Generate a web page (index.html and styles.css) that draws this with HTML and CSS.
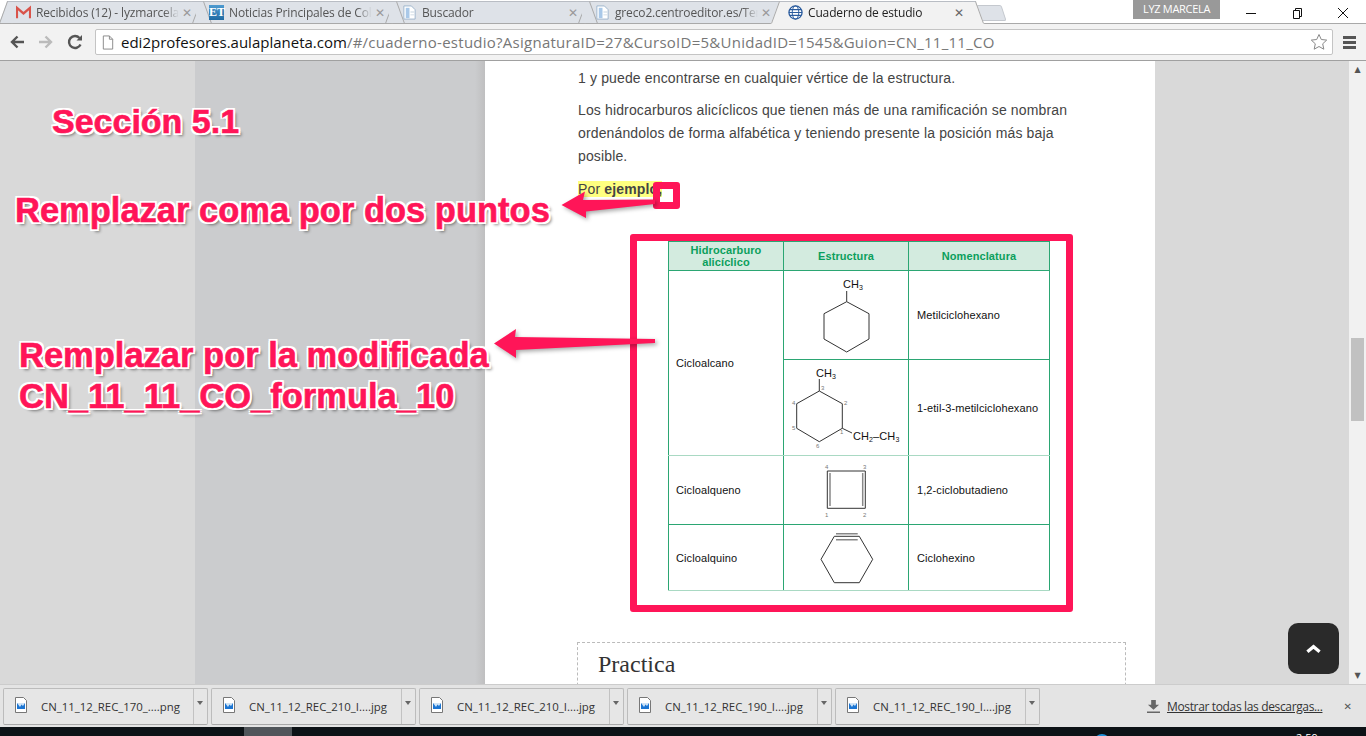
FILE: index.html
```html
<!DOCTYPE html>
<html lang="es">
<head>
  <meta charset="UTF-8">
  <title>Cuaderno de estudio</title>
  <link rel="stylesheet" href="styles.css">
</head>
<body>
  <!-- tab strip -->
  <div class="tabstrip">
    <div class="tab">
      <svg class="favicon" viewBox="0 0 16 16"><path d="M1 14V3l7 6 7-6v11" fill="none" stroke="#d9534a" stroke-width="2.4"/></svg>
      <span class="tab-title">Recibidos (12) - lyzmarcela</span>
      <span class="tab-close">✕</span>
    </div>
    <div class="tab">
      <span class="favicon favicon-et">ET</span>
      <span class="tab-title">Noticias Principales de Col</span>
      <span class="tab-close">✕</span>
    </div>
    <div class="tab">
      <svg class="favicon" viewBox="0 0 16 16"><path d="M2 1h8l4 4v10H2z" fill="#fff" stroke="#9db4cc"/><path d="M4 3h4v11H4z" fill="#a9c8e8"/><path d="M9 7h4v1H9zM9 10h4v1H9z" fill="#c6d3df"/></svg>
      <span class="tab-title">Buscador</span>
      <span class="tab-close">✕</span>
    </div>
    <div class="tab">
      <svg class="favicon" viewBox="0 0 16 16"><path d="M2 1h8l4 4v10H2z" fill="#fff" stroke="#9db4cc"/><path d="M4 3h4v11H4z" fill="#a9c8e8"/><path d="M9 7h4v1H9zM9 10h4v1H9z" fill="#c6d3df"/></svg>
      <span class="tab-title">greco2.centroeditor.es/Ter</span>
      <span class="tab-close">✕</span>
    </div>
    <div class="tab tab-active">
      <svg class="favicon" viewBox="0 0 16 16"><circle cx="8" cy="8" r="7" fill="#fff" stroke="#2b5c9e" stroke-width="1.4"/><path d="M2 5h12M1 8h14M2 11h12" stroke="#2b5c9e" stroke-width="1.3"/><ellipse cx="8" cy="8" rx="3.5" ry="7" fill="none" stroke="#2b5c9e"/></svg>
      <span class="tab-title">Cuaderno de estudio</span>
      <span class="tab-close">✕</span>
    </div>
    <div class="newtab"></div>
    <div class="user-badge">LYZ MARCELA</div>
    <div class="winctl">
      <svg viewBox="0 0 12 12"><path d="M1 6.500h10" stroke="#111" stroke-width="1"/></svg>
      <svg viewBox="0 0 12 12"><path d="M2.500 3.500h6v8h-6zM4.500 3.500v-2h6v8h-2" fill="none" stroke="#111"/></svg>
      <svg viewBox="0 0 12 12"><path d="M1 1l10 10M11 1L1 11" stroke="#111"/></svg>
    </div>
  </div>

  <!-- toolbar -->
  <div class="toolbar">
    <svg class="navicon" viewBox="0 0 16 16"><path d="M15 8H4M8.500 2.500L3 8l5.500 5.500" fill="none" stroke="#555" stroke-width="2.400"/></svg>
    <svg class="navicon" viewBox="0 0 16 16"><path d="M1 8h11M7.500 2.500L13 8l-5.500 5.500" fill="none" stroke="#bbb" stroke-width="2.400"/></svg>
    <svg class="navicon" viewBox="0 0 16 16"><path d="M13.500 10.500A6 6 0 1 1 12.500 4" fill="none" stroke="#555" stroke-width="2.400"/><path d="M9.500 6.500H15V1z" fill="#555"/></svg>
    <div class="omnibox">
      <svg class="pageicon" viewBox="0 0 12 16"><path d="M1 1h6.500L11 4.500V15H1z M7.500 1v3.500H11" fill="#fff" stroke="#888"/></svg>
      <span class="url"><b>edi2profesores.aulaplaneta.com</b>/#/cuaderno-estudio?AsignaturaID=27&amp;CursoID=5&amp;UnidadID=1545&amp;Guion=CN_11_11_CO</span>
      <svg class="star" viewBox="0 0 18 18"><path d="M9 1.500l2.300 5 5.400.6-4 3.700 1.100 5.400L9 13.500l-4.800 2.700 1.100-5.400-4-3.700 5.400-.6z" fill="#fff" stroke="#888"/></svg>
    </div>
    <div class="menu-btn"><i></i><i></i><i></i></div>
  </div>

  <!-- page -->
  <div class="viewport">
    <div class="gutter-left"><div class="gutter-a"></div><div class="gutter-b"></div></div>
    <div class="article">
      <p class="clipped">Cuando el ciclo tiene una sola ramificación, esta no lleva el localizador</p>
      <p>1 y puede encontrarse en cualquier vértice de la estructura.</p>
      <p>Los hidrocarburos alicíclicos que tienen más de una ramificación se nombran ordenándolos de forma alfabética y teniendo presente la posición más baja posible.</p>
      <p class="example"><mark>Por <strong>ejemplo,</strong></mark></p>

      <table class="formula">
        <colgroup><col class="col-a"><col class="col-b"><col class="col-c"></colgroup>
        <tr class="row-head">
          <th>Hidrocarburo alicíclico</th><th>Estructura</th><th>Nomenclatura</th>
        </tr>
        <tr class="row-1">
          <td rowspan="2">Cicloalcano</td>
          <td class="mol">
            <svg viewBox="0 0 125 88">
              <path d="M62.700 30.700L85 42.700V68L62.700 81 40 68V42.700zM62.700 30.700V20"/>
              <text x="59" y="17">CH<tspan class="sub" dy="2">3</tspan></text>
            </svg>
          </td>
          <td class="name">Metilciclohexano</td>
        </tr>
        <tr class="row-2">
          <td class="mol">
            <svg viewBox="0 0 125 95">
              <path d="M35.300 31L58.300 43.700V68.300L35.300 81.700 12.700 68.300V43.700zM35.300 31V19M58.300 68.300L68 73"/>
              <text x="32" y="17">CH<tspan class="sub" dy="2">3</tspan></text>
              <text x="69" y="80">CH<tspan class="sub" dy="2">2</tspan><tspan dy="-2">–CH</tspan><tspan class="sub" dy="2">3</tspan></text>
              <text class="num" x="37" y="30">3</text><text class="num" x="60" y="45">2</text>
              <text class="num" x="8" y="45">4</text><text class="num" x="8" y="70">5</text>
              <text class="num" x="32" y="88">6</text><text class="num" x="56" y="74">1</text>
            </svg>
          </td>
          <td class="name">1-etil-3-metilciclohexano</td>
        </tr>
        <tr class="row-3">
          <td>Cicloalqueno</td>
          <td class="mol">
            <svg viewBox="0 0 125 68">
              <path d="M43.300 15H81.300V52.300H43.300z"/>
              <path class="bond2" d="M46 17V50M78.700 17V50"/>
              <text class="num" x="41" y="13">4</text><text class="num" x="79" y="13">3</text>
              <text class="num" x="41" y="61">1</text><text class="num" x="79" y="61">2</text>
            </svg>
          </td>
          <td class="name">1,2-ciclobutadieno</td>
        </tr>
        <tr class="row-4">
          <td>Cicloalquino</td>
          <td class="mol">
            <svg viewBox="0 0 125 65">
              <path d="M50.300 11.300H75.300L88.700 34.300 75.300 57.700H50.300L37 34.300z"/>
              <path class="bond2" d="M52 8.700H73.700M52 14.700H73.700"/>
            </svg>
          </td>
          <td class="name">Ciclohexino</td>
        </tr>
      </table>

      <div class="practica"><h3>Practica</h3></div>
    </div>
    <div class="gutter-right"></div>
    <div class="scrollbar">
      <span class="sb-arrow">▲</span>
      <div class="sb-track"><div class="sb-thumb"></div></div>
      <span class="sb-arrow">▼</span>
    </div>

    <!-- reviewer notes painted over the capture -->
    <div class="note note-seccion">Sección 5.1</div>
    <div class="note note-coma">Remplazar coma por dos puntos</div>
    <div class="note note-modif">Remplazar por la modificada<br>CN_11_11_CO_formula_10</div>
    <div class="mark-box"></div>
    <div class="mark-frame"></div>
    <svg class="arrows" viewBox="0 1 1366 623">
      <path d="M561.500 145L585 131.500 583 140 655 139.500 655 144 586 151.500 586 158z"/>
      <path d="M494 283.500L516 269 515 277 655 279 655 283 516 290 516 298z"/>
    </svg>
    <div class="totop"><svg viewBox="0 0 16 10"><path d="M1.500 8L8 2.500 14.500 8" fill="none" stroke="#fff" stroke-width="3.500"/></svg></div>
  </div>

  <!-- download shelf -->
  <div class="shelf">
    <div class="dl"><div class="dl-main"><svg class="dl-icon" viewBox="0 0 12 16"><path d="M.5.500h8l3 3v12H.5z" fill="#fff" stroke="#777"/><path d="M2 6h8v6H2z" fill="#1c75d2"/><path d="M2 6h8l-2 3-1.500-1.500L5 10z" fill="#cfe4f7"/></svg><span>CN_11_12_REC_170_....png</span></div><div class="dl-drop"></div></div>
    <div class="dl"><div class="dl-main"><svg class="dl-icon" viewBox="0 0 12 16"><path d="M.5.500h8l3 3v12H.5z" fill="#fff" stroke="#777"/><path d="M2 6h8v6H2z" fill="#1c75d2"/><path d="M2 6h8l-2 3-1.500-1.500L5 10z" fill="#cfe4f7"/></svg><span>CN_11_12_REC_210_I....jpg</span></div><div class="dl-drop"></div></div>
    <div class="dl"><div class="dl-main"><svg class="dl-icon" viewBox="0 0 12 16"><path d="M.5.500h8l3 3v12H.5z" fill="#fff" stroke="#777"/><path d="M2 6h8v6H2z" fill="#1c75d2"/><path d="M2 6h8l-2 3-1.500-1.500L5 10z" fill="#cfe4f7"/></svg><span>CN_11_12_REC_210_I....jpg</span></div><div class="dl-drop"></div></div>
    <div class="dl"><div class="dl-main"><svg class="dl-icon" viewBox="0 0 12 16"><path d="M.5.500h8l3 3v12H.5z" fill="#fff" stroke="#777"/><path d="M2 6h8v6H2z" fill="#1c75d2"/><path d="M2 6h8l-2 3-1.500-1.500L5 10z" fill="#cfe4f7"/></svg><span>CN_11_12_REC_190_I....jpg</span></div><div class="dl-drop"></div></div>
    <div class="dl"><div class="dl-main"><svg class="dl-icon" viewBox="0 0 12 16"><path d="M.5.500h8l3 3v12H.5z" fill="#fff" stroke="#777"/><path d="M2 6h8v6H2z" fill="#1c75d2"/><path d="M2 6h8l-2 3-1.500-1.500L5 10z" fill="#cfe4f7"/></svg><span>CN_11_12_REC_190_I....jpg</span></div><div class="dl-drop"></div></div>
    <div class="shelf-right">
      <svg class="dl-all" viewBox="0 0 14 14"><path d="M4.500 0h5v5H13L7 10.500 1 5h3.500zM0 12.500h14V14H0z" fill="#666"/></svg>
      <a class="show-all">Mostrar todas las descargas...</a>
      <span class="shelf-close">✕</span>
    </div>
  </div>

  <!-- sliver of the taskbar -->
  <div class="taskbar">
    <div class="task-active"></div>
    <div class="task-dot"></div>
    <div class="task-clock">2:59</div>
  </div>
</body>
</html>
```

FILE: styles.css
```css
* {
  box-sizing: border-box;
}
html, body {
  margin: 0;
  height: 100%;
  overflow: hidden;
}
body {
  display: flex;
  flex-direction: column;
  width: 1366px;
  height: 736px;
  font-family: "Open Sans", "Noto Sans", sans-serif;
  background: #0c1216;
}

/* tabs */
.tabstrip {
  display: flex;
  align-items: flex-end;
  height: 24px;
  padding-left: 9px;
  background: #fff;
  box-shadow: inset 0 -1px 0 #a9a9a9;
  flex: none;
}
.tab {
  position: relative;
  display: flex;
  align-items: center;
  width: 193px;
  height: 23px;
  padding: 0 0 0 7px;
  background: #dee2e8;
  border-top: 1px solid #b9bdc4;
  border-bottom: 1px solid #a9a9a9;
  font-size: 12px;
  letter-spacing: -.15px;
  color: #555;
}
.tab::before, .tab::after {
  content: "";
  position: absolute;
  top: -1px;
  bottom: -1px;
  width: 12px;
  background: #dee2e8;
  border-top: 1px solid #b9bdc4;
  border-bottom: 1px solid #a9a9a9;
  z-index: 1;
}
.tab::before {
  left: -6px;
  border-left: 1px solid #a9a9a9;
  transform: skewX(-20deg);
}
.tab::after {
  right: -6px;
  border-right: 1px solid #a9a9a9;
  transform: skewX(20deg);
  z-index: 2;
}
.tab > * {
  position: relative;
  z-index: 3;
}
.tab-active {
  z-index: 5;
  background: #f2f2f2;
  color: #222;
  border-bottom-color: #f2f2f2;
}
.tab-active::before, .tab-active::after {
  background: #f2f2f2;
  border-bottom-color: #f2f2f2;
}
.favicon {
  width: 15px;
  height: 15px;
  flex: none;
  margin-right: 5px;
}
.favicon-et {
  display: block;
  background: linear-gradient(#4d9ad0, #1f6ba3);
  color: #fff;
  font: bold 12px/15px "Liberation Serif", serif;
  letter-spacing: 0;
  text-align: center;
}
.tab-title {
  width: 143px;
  white-space: nowrap;
  overflow: hidden;
  -webkit-mask-image: linear-gradient(to right, #000 128px, transparent 143px);
  mask-image: linear-gradient(to right, #000 128px, transparent 143px);
}
.tab-close {
  margin-left: 3px;
  font-size: 12px;
  font-weight: bold;
  color: #999;
  font-family: "DejaVu Sans", sans-serif;
}
.tab-active .tab-close {
  color: #666;
}
.newtab {
  width: 26px;
  height: 16px;
  margin: 0 0 3px 4px;
  background: #dee2e8;
  border: 1px solid #c4c8ce;
  border-radius: 2px;
  transform: skewX(18deg);
}
.user-badge {
  align-self: flex-start;
  width: 87px;
  height: 19px;
  margin-left: 129px;
  background: #999;
  color: #fff;
  font-size: 11px;
  line-height: 17px;
  text-align: center;
  letter-spacing: -.3px;
}
.winctl {
  align-self: flex-start;
  display: flex;
  gap: 34px;
  margin: 7px 0 0 25px;
}
.winctl svg {
  width: 12px;
  height: 12px;
}

/* toolbar */
.toolbar {
  display: flex;
  align-items: center;
  height: 37px;
  padding: 0 0 0 9px;
  background: #f2f2f2;
  border-bottom: 1px solid #a0a0a0;
  flex: none;
}
.navicon {
  width: 16px;
  height: 16px;
  margin-right: 13px;
}
.omnibox {
  display: flex;
  align-items: center;
  width: 1238px;
  height: 26px;
  margin-left: -1px;
  padding: 0 4px 0 6px;
  background: #fff;
  border: 1px solid #c4c4c4;
  border-radius: 2px;
}
.pageicon {
  width: 12px;
  height: 15px;
  margin-right: 7px;
}
.url {
  flex: 1;
  font-size: 15px;
  letter-spacing: .26px;
  color: #777;
  white-space: nowrap;
}
.url b {
  font-weight: normal;
  letter-spacing: 0;
  color: #111;
}
.star {
  width: 18px;
  height: 18px;
}
.menu-btn {
  display: flex;
  flex-direction: column;
  gap: 2px;
  margin-left: 10px;
}
.menu-btn i {
  display: block;
  width: 13px;
  height: 3px;
  background: #555;
}

/* page */
.viewport {
  position: relative;
  display: flex;
  height: 623px;
  overflow: hidden;
  flex: none;
  background: #fff;
}
.gutter-left {
  display: flex;
  width: 485px;
  flex: none;
}
.gutter-a {
  width: 195px;
  background: #d9d9d9;
}
.gutter-b {
  flex: 1;
  background: linear-gradient(to right, #cbccce 0, #cbccce 280px, #bfbfc0 290px);
}
.article {
  width: 670px;
  flex: none;
  padding: 0 0 0 93px;
  background: #fff;
  color: #444;
  font-family: "Liberation Sans", Arial, sans-serif;
  font-size: 14px;
  line-height: 23px;
  letter-spacing: .14px;
}
.article p {
  width: 500px;
  margin: 0 0 9px;
}
.article .clipped {
  margin-top: -26px;
}
.article .example {
  margin-top: 10px;
  margin-bottom: 0;
  line-height: 15px;
  padding-top: 4px;
}
mark {
  background: #ffff80;
  color: #444;
}
.gutter-right {
  flex: 1;
  background: #d9d9d9;
}

/* the table is a picture in the original, hence the soft colours */
.formula {
  table-layout: fixed;
  width: 381px;
  margin: 44px 0 0 90px;
  border-collapse: collapse;
  font-size: 11px;
  line-height: 12px;
  letter-spacing: .1px;
  color: #111;
}
.col-a { width: 115px; }
.col-b { width: 125px; }
.col-c { width: 141px; }
.formula th, .formula td {
  border: 1px solid #2ba673;
  padding: 0 7px;
  text-align: left;
  vertical-align: middle;
}
.formula th {
  background: #d3ebdf;
  color: #0b9f5c;
  text-align: center;
}
.formula .name {
  padding-left: 8px;
}
.row-head { height: 29px; }
.formula .row-2 td, .formula td[rowspan] {
  border-bottom-color: #a9d9c3;
}
.formula .row-4 td {
  border-bottom-color: #a9d9c3;
}
.formula .mol {
  padding: 0;
}
/* the height of each molecule row comes from its drawing */
.mol svg {
  display: block;
  width: 125px;
  fill: none;
  stroke: #333;
}
.mol text {
  fill: #111;
  stroke: none;
  font-size: 11px;
}
.mol .sub {
  font-size: 7px;
}
.mol .num {
  fill: #777;
  font-size: 6px;
}
.mol .bond2 {
  stroke: #888;
  stroke-width: 1.500;
}
.practica {
  width: 549px;
  height: 120px;
  margin: 51px 0 0 -1px;
  padding: 9px 20px;
  border: 1px dashed #bbb;
}
.practica h3 {
  margin: 0;
  font: normal 24px/24px "Liberation Serif", serif;
  letter-spacing: 0;
  color: #333;
}

/* scrollbar */
.scrollbar {
  display: flex;
  flex-direction: column;
  align-items: center;
  width: 17px;
  flex: none;
  background: #f1f1f1;
}
.sb-arrow {
  height: 17px;
  font: 8px/17px "DejaVu Sans", sans-serif;
  color: #555;
}
.sb-track {
  flex: 1;
  width: 100%;
  padding: 260px 2px 0;
}
.sb-thumb {
  height: 83px;
  background: #c1c1c1;
}

/* annotations */
.note {
  position: absolute;
  font-family: "Liberation Sans", Arial, sans-serif;
  font-weight: bold;
  font-size: 34.500px;
  line-height: 41px;
  color: #ff1558;
  white-space: nowrap;
  -webkit-text-stroke: .6px #ff1558;
  text-shadow: 2px 0 0 #fff, -2px 0 0 #fff, 0 2px 0 #fff, 0 -2px 0 #fff,
    2px 2px 0 #fff, -2px 2px 0 #fff, 2px -2px 0 #fff, -2px -2px 0 #fff,
    3px 3px 3px rgba(0,0,0,.45);
}
.note-seccion {
  left: 52px;
  top: 40px;
  font-size: 34px;
}
.note-coma {
  left: 15px;
  top: 129px;
}
.note-modif {
  left: 19px;
  top: 274px;
}
.mark-box {
  position: absolute;
  left: 653px;
  top: 121px;
  width: 27px;
  height: 27px;
  border: 7px solid #ff1558;
  border-radius: 3px;
}
.mark-frame {
  position: absolute;
  left: 630px;
  top: 173px;
  width: 443px;
  height: 378px;
  border: 7px solid #ff1558;
  border-radius: 3px;
}
.arrows {
  position: absolute;
  left: 0;
  top: 0;
  width: 1366px;
  height: 623px;
  fill: #ff1558;
  filter: drop-shadow(2px 2px 2px rgba(0,0,0,.35));
  pointer-events: none;
}
.totop {
  position: absolute;
  left: 1288px;
  top: 562px;
  display: flex;
  align-items: center;
  justify-content: center;
  width: 51px;
  height: 51px;
  background: #2a2a2a;
  border-radius: 10px;
}
.totop svg {
  width: 15px;
  height: 10px;
}

/* downloads */
.shelf {
  display: flex;
  align-items: center;
  height: 43px;
  padding: 0 0 0 3px;
  background: #e4e4e4;
  border-top: 1px solid #ccc;
  flex: none;
}
.dl {
  display: flex;
  width: 205px;
  height: 37px;
  margin-right: 3px;
  background: #e6e6e6;
  border: 1px solid #bcbcbc;
  border-bottom-color: #a8a8a8;
  border-radius: 2px;
}
.dl-main {
  display: flex;
  align-items: center;
  flex: 1;
  padding-left: 11px;
  font-size: 11.400px;
  color: #333;
  border-right: 1px solid #c2c2c2;
}
.dl-icon {
  width: 12px;
  height: 16px;
  margin: -3px 14px 0 0;
}
.dl-drop {
  position: relative;
  width: 13px;
}
.dl-drop::after {
  content: "";
  position: absolute;
  left: 3px;
  top: 12px;
  border: 3.500px solid transparent;
  border-top: 4px solid #666;
}
.shelf-right {
  display: flex;
  align-items: center;
  margin-left: 104px;
}
.dl-all {
  width: 13px;
  height: 13px;
  margin-right: 7px;
}
.show-all {
  font-size: 12px;
  letter-spacing: -.35px;
  color: #333;
  text-decoration: underline;
}
.shelf-close {
  margin-left: 21px;
  font: bold 10px "DejaVu Sans", sans-serif;
  color: #555;
}

/* taskbar */
.taskbar {
  position: relative;
  flex: 1;
  display: flex;
  overflow: hidden;
  background: #0c1216;
}
.task-active {
  width: 48px;
  margin-left: 244px;
  background: #50555a;
}
.task-dot {
  width: 16px;
  height: 16px;
  margin: 7px 0 0 802px;
  border-radius: 50%;
  background: #1d8fd8;
}
.task-clock {
  margin: 5px 0 0 186px;
  font-size: 11px;
  line-height: 12px;
  color: #fff;
}
```
